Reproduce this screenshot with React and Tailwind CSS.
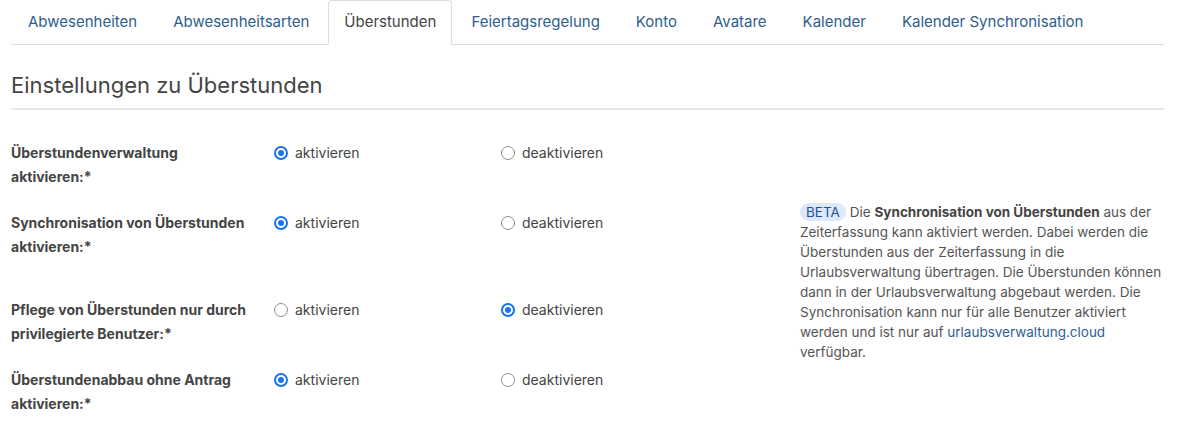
import React from 'react';

const tabs = [
  'Abwesenheiten',
  'Abwesenheitsarten',
  'Überstunden',
  'Feiertagsregelung',
  'Konto',
  'Avatare',
  'Kalender',
  'Kalender Synchronisation',
];

const rows = [
  { label: ['Überstundenverwaltung', 'aktivieren:*'], value: 'on', mb: 'mb-[22px]' },
  { label: ['Synchronisation von Überstunden', 'aktivieren:*'], value: 'on', mb: 'mb-[39px]' },
  { label: ['Pflege von Überstunden nur durch', 'privilegierte Benutzer:*'], value: 'off', mb: 'mb-[22px]' },
  { label: ['Überstundenabbau ohne Antrag', 'aktivieren:*'], value: 'on', mb: '' },
];

function Radio({ checked, children }) {
  return (
    <label className="flex items-center gap-[7px] text-[14px] text-[#444] leading-6">
      {checked ? (
        <span className="w-[14px] h-[14px] rounded-full border-[2px] border-[#1a73f0] bg-white flex items-center justify-center shrink-0">
          <span className="w-[6px] h-[6px] rounded-full bg-[#1a73f0]" />
        </span>
      ) : (
        <span className="w-[14px] h-[14px] rounded-full border border-[#8e8e8e] bg-white shrink-0" />
      )}
      {children}
    </label>
  );
}

export default function App() {
  return (
    <div className="bg-white w-[1196px] h-[422px] overflow-hidden font-['Inter',sans-serif] text-[#444]">
      <div className="ml-[11px] w-[1153px]">
        {/* tabs */}
        <ul className="flex border-b border-[#dddddd]">
          {tabs.map((t) => {
            const active = t === 'Überstunden';
            return (
              <li key={t} className="mr-[2px] -mb-px">
                <a
                  className={
                    active
                      ? 'block px-[15px] pt-[10px] pb-[11px] text-[15px] leading-[22px] text-[#444] bg-white border border-[#dddddd] border-b-white rounded-t-[4px]'
                      : 'block px-[16px] pt-[10px] pb-[11px] text-[15px] leading-[22px] text-[#2f5e8e] border border-transparent'
                  }
                >
                  {t}
                </a>
              </li>
            );
          })}
        </ul>

        {/* heading */}
        <h2 className="mt-[26px] pb-[9px] text-[22px] leading-[28px] font-normal text-[#444] border-b-2 border-[#e6e6e6]">
          Einstellungen zu Überstunden
        </h2>

        <div className="flex pt-[31px]">
          <div className="w-[789px]">
            {rows.map((r, i) => (
              <div key={i} className={`flex ${r.mb}`}>
                <div className="w-[263px] text-[14px] font-bold leading-6 text-[#444]">
                  {r.label[0]}
                  <br />
                  {r.label[1]}
                </div>
                <div className="w-[227px]">
                  <Radio checked={r.value === 'on'}>aktivieren</Radio>
                </div>
                <div>
                  <Radio checked={r.value === 'off'}>deaktivieren</Radio>
                </div>
              </div>
            ))}
          </div>

          <p className="w-[364px] mt-[61px] text-[13.5px] leading-5 text-[#555]">
            <span className="inline-block rounded-full bg-[#dce8fb] text-[#1f4fa0] px-[6px] leading-[18px] mr-[4px]">
              BETA
            </span>
            Die <b className="font-bold text-[#444]">Synchronisation von Überstunden</b> aus der Zeiterfassung
            kann aktiviert werden. Dabei werden die Überstunden aus der Zeiterfassung in die
            Urlaubsverwaltung übertragen. Die Überstunden können dann in der Urlaubsverwaltung
            abgebaut werden. Die Synchronisation kann nur für alle Benutzer aktiviert werden und ist
            nur auf <a className="text-[#2f5e8e]">urlaubsverwaltung.cloud</a> verfügbar.
          </p>
        </div>
      </div>
    </div>
  );
}
